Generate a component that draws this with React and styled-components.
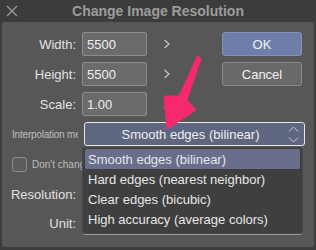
import React from 'react'
import styled, { createGlobalStyle } from 'styled-components'

const GlobalStyle = createGlobalStyle`
  html, body {
    margin: 0;
    padding: 0;
    background: #3c3c3c;
  }
  body {
    font-family: "Liberation Sans", Arial, sans-serif;
    -webkit-font-smoothing: antialiased;
  }
`

const Window = styled.div`
  position: relative;
  width: 316px;
  height: 250px;
  background: #3c3c3c;
  overflow: hidden;
  display: flex;
  flex-direction: column;
`

const TitleBar = styled.div`
  height: 22px;
  display: flex;
  align-items: center;
  justify-content: center;
  position: relative;
  color: #9c9c9c;
  font-weight: bold;
  font-size: 14px;
`

const CloseX = styled.svg`
  position: absolute;
  left: 6px;
  top: 5px;
`

const Panel = styled.div`
  margin: 0 2px;
  height: 225px;
  background: #575757;
  border-radius: 2px;
  padding-top: 10px;
  box-sizing: border-box;
  color: #e2e2e2;
  font-size: 13px;
`

const TopGrid = styled.div`
  display: grid;
  grid-template-columns: 74px 65px 63px 80px;
  grid-auto-rows: 24px;
  column-gap: 6px;
  row-gap: 6px;
`

const Label = styled.div`
  display: flex;
  align-items: center;
  justify-content: flex-end;
  white-space: nowrap;
`

const Input = styled.div`
  background: #6b6b6b;
  border: 1px solid #8c8c8c;
  border-radius: 2px;
  display: flex;
  align-items: center;
  padding-left: 4px;
  box-sizing: border-box;
  color: #f0f0f0;
`

const Chevron = styled.div`
  display: flex;
  align-items: center;
  padding-left: 10px;
`

const Button = styled.div`
  display: flex;
  align-items: center;
  justify-content: center;
  box-sizing: border-box;
  border-radius: 3px;
  border: 1px solid ${(p) => (p.primary ? '#8592b8' : '#8a8a8a')};
  background: ${(p) => (p.primary ? '#6f7ea9' : '#696969')};
  color: #f2f2f2;
`

const Row = styled.div`
  display: flex;
  align-items: center;
  column-gap: 6px;
  height: ${(p) => p.h || 24}px;
  margin-top: ${(p) => p.mt || 0}px;
`

const SmallLabel = styled.div`
  width: 66px;
  padding-left: 10px;
  overflow: hidden;
  white-space: nowrap;
  font-size: 10px;
  color: #bdbdbd;
  letter-spacing: -0.2px;
`

const WideLabel = styled.div`
  width: 74px;
  text-align: right;
  white-space: nowrap;
`

const Select = styled.div`
  position: relative;
  width: 221px;
  height: 24px;
  box-sizing: border-box;
  padding-right: 8px;
  border: 1px solid ${(p) => (p.active ? '#e6e6e6' : '#9a9a9a')};
  border-radius: 3px;
  background: ${(p) => (p.active ? '#5f6680' : '#666')};
  display: flex;
  align-items: center;
  justify-content: center;
  color: #eeeeee;
`

const UpDown = styled.svg`
  position: absolute;
  right: 5px;
  top: 3px;
`

const CheckBox = styled.div`
  width: 15px;
  height: 15px;
  margin-left: 10px;
  box-sizing: border-box;
  border: 1px solid #8c8c8c;
  border-radius: 3px;
  background: #5c5c5c;
`

const CheckText = styled.div`
  width: 50px;
  overflow: hidden;
  font-size: 10px;
  color: #bdbdbd;
  white-space: nowrap;
  margin-left: -1px;
`

const Menu = styled.div`
  position: absolute;
  left: 82px;
  top: 147px;
  width: 221px;
  height: 87px;
  box-sizing: border-box;
  background: #3f3f3f;
  border: 1px solid #4a4a4a;
  border-radius: 2px;
  padding: 1px 2px;
  display: flex;
  flex-direction: column;
`

const MenuItem = styled.div`
  height: 20px;
  display: flex;
  align-items: center;
  padding-left: 3px;
  border-radius: 2px;
  font-size: 13px;
  color: #e6e6e6;
  background: ${(p) => (p.selected ? '#686e8b' : 'transparent')};
`

const Arrow = styled.svg`
  position: absolute;
  left: 0;
  top: 0;
  pointer-events: none;
`

const items = [
  'Smooth edges (bilinear)',
  'Hard edges (nearest neighbor)',
  'Clear edges (bicubic)',
  'High accuracy (average colors)',
]

const sizes = [
  ['Width:', '5500'],
  ['Height:', '5500'],
  ['Scale:', '1.00'],
]

export default function App() {
  return (
    <Window>
      <GlobalStyle />
      <TitleBar>
        <CloseX width="12" height="12" viewBox="0 0 12 12">
          <path d="M1 1 L11 11 M11 1 L1 11" stroke="#9a9a9a" strokeWidth="1.3" />
        </CloseX>
        Change Image Resolution
      </TitleBar>
      <Panel>
        <TopGrid>
          {sizes.map(([label, val], i) => (
            <React.Fragment key={label}>
              <Label>{label}</Label>
              <Input>{val}</Input>
              <Chevron>
                <svg width="8" height="10" viewBox="0 0 8 10">
                  <path d="M1.5 1 L6 5 L1.5 9" fill="none" stroke="#c8c8c8" strokeWidth="1.2" />
                </svg>
              </Chevron>
              {i === 0 && <Button primary>OK</Button>}
              {i === 1 && <Button>Cancel</Button>}
              {i === 2 && <div />}
            </React.Fragment>
          ))}
        </TopGrid>
        <Row mt={6}>
          <SmallLabel>Interpolation method:</SmallLabel>
          <Select active>
            Smooth edges (bilinear)
            <UpDown width="11" height="17" viewBox="0 0 11 17">
              <path d="M1 5.5 L5.5 1 L10 5.5 M1 11.5 L5.5 16 L10 11.5" fill="none" stroke="#c9c9c9" strokeWidth="1" />
            </UpDown>
          </Select>
        </Row>
        <Row mt={11} h={15}>
          <CheckBox />
          <CheckText>Don't change pixel count</CheckText>
        </Row>
        <Row mt={10} h={24}>
          <WideLabel>Resolution:</WideLabel>
          <Select />
        </Row>
        <Row mt={5} h={24}>
          <WideLabel>Unit:</WideLabel>
          <Select />
        </Row>
      </Panel>
      <Menu>
        {items.map((t, i) => (
          <MenuItem key={t} selected={i === 0}>{t}</MenuItem>
        ))}
      </Menu>
      <Arrow width="316" height="250" viewBox="0 0 316 250">
        <path
          d="M199 56 L201 59 L187 100 L196 110 L167 129 L164 96 L179 96 L197 57 Z"
          fill="#f5296b"
          stroke="#f5296b"
          strokeLinejoin="round"
        />
      </Arrow>
    </Window>
  )
}
